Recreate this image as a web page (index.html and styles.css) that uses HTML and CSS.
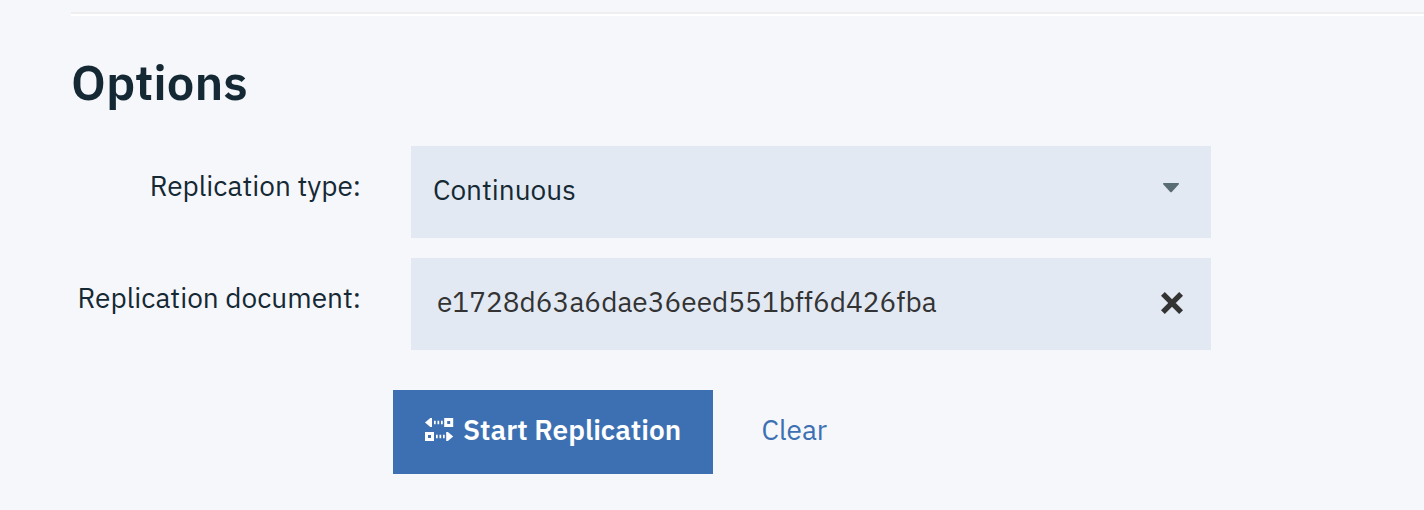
FILE: index.html
```html
<!DOCTYPE html>
<html lang="en">
<head>
<meta charset="utf-8">
<title>Replication options</title>
<link rel="stylesheet" href="styles.css">
</head>
<body>
<main class="page">
  <hr class="divider">
  <h3 class="heading">Options</h3>
  <div class="row">
    <div class="label">Replication type:</div>
    <div class="field select">
      <span>Continuous</span>
      <svg class="caret" width="18" height="10" viewBox="0 0 18 10"><path d="M1.6 0H16.4Q17.6 .4 16.6 1.5L10 8.7Q9 9.7 8 8.7L1.4 1.5Q.4 .4 1.6 0Z" fill="#5a6c74"/></svg>
    </div>
  </div>
  <div class="row">
    <div class="label">Replication document:</div>
    <div class="field input">
      <span>e1728d63a6dae36eed551bff6d426fba</span>
      <svg class="cross" width="22" height="22" viewBox="0 0 22 22"><path d="M1.9 1.9L20.1 20.1M20.1 1.9L1.9 20.1" stroke="#333" stroke-width="5.4" fill="none"/></svg>
    </div>
  </div>
  <div class="actions">
    <div class="button">
      <svg class="icon" width="29" height="24" viewBox="0 0 29 24" fill="#fff">
        <path d="M0 5.5L5.3 1H7V10H5.3Z"/>
        <path d="M9 3.7h1.7v3.6H9zM12.5 3.7h1.7v3.6h-1.7zM16 3.7h1.7v3.6H16z"/>
        <path fill-rule="evenodd" d="M19.2 1h9v9h-9zM22.2 4v3h3v-3z"/>
        <path fill-rule="evenodd" d="M0 15h9v9H0zM3 18v3h3v-3z"/>
        <path d="M11 17.7h1.7v3.6H11zM14.5 17.7h1.7v3.6h-1.7zM18 17.7h1.7v3.6H18z"/>
        <path d="M28.2 19.5L22.9 15H21.2V24H22.9Z"/>
      </svg>
      <span>Start Replication</span>
    </div>
    <a class="clear">Clear</a>
  </div>
</main>
</body>
</html>
```
FILE: styles.css
```css
* { box-sizing: border-box; }
body {
  margin: 0;
  background: #f5f7fb;
  color: #152934;
  font-family: "IBM Plex Sans", Roboto, "Liberation Sans", sans-serif;
  font-size: 28px;
  line-height: 40px;
  white-space: nowrap;
}
.page { height: 510px; padding-top: 12px; overflow: hidden; }
.divider {
  height: 4px;
  margin: 0 0 0 71px;
  border: 0;
  border-top: 2px solid #eee;
  border-bottom: 2px solid #fff;
}
.heading {
  margin: 36px 0 34px 71px;
  font-size: 49px;
  line-height: 60px;
  font-weight: 600;
}
.row { display: flex; margin-bottom: 20px; }
.label { width: 361px; margin-right: 50px; padding-top: 20px; text-align: right; }
.field {
  display: flex;
  justify-content: space-between;
  width: 800px;
  height: 92px;
  background: #e2e9f3;
}
.select { padding: 24px 31px 0 22px; }
.input { padding: 24px 28px 0 26px; color: #333; }
.caret { margin-top: 13px; }
.cross { margin-top: 10px; }
.actions { display: flex; margin: 40px 0 0 393px; }
.button {
  display: flex;
  width: 320px;
  height: 84px;
  padding: 20px 0 0 32px;
  background: #3d70b2;
  color: #fff;
  font-weight: 600;
}
.icon { margin: 7px 9px 0 0; }
.clear { margin: 20px 0 0 48.5px; color: #3d70b2; }
```
